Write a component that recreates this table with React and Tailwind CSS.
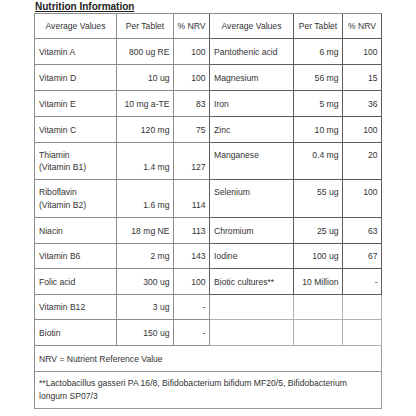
import React from "react";

const L = "border-r border-b border-[#8c8c8c]";
const LD = "border-r border-b border-r-[#5c5c5c] border-b-[#8c8c8c]";
const R = "border-r border-b border-[#5c5c5c]";
const E = "border-r border-b border-[#b0b0b0]";

function Cell({ cls, align = "left", children }) {
  const a =
    align === "right"
      ? "justify-end text-right pr-[3.5px]"
      : align === "center"
      ? "justify-center text-center"
      : "justify-start text-left pl-[4px]";
  return <div className={`flex items-center ${a} ${cls}`}>{children}</div>;
}

function Two({ a, b }) {
  return (
    <span className="block leading-[12.4px]">
      {a}
      <br />
      {b}
    </span>
  );
}

const nb = "\u00a0";

export default function App() {
  const rows = [
    ["Vitamin A", "800 ug RE", "100", "Pantothenic acid", "6 mg", "100"],
    ["Vitamin D", "10 ug", "100", "Magnesium", "56 mg", "15"],
    ["Vitamin E", "10 mg a-TE", "83", "Iron", "5 mg", "36"],
    ["Vitamin C", "120 mg", "75", "Zinc", "10 mg", "100"],
  ];
  const rows2 = [
    ["Niacin", "18 mg NE", "113", "Chromium", "25 ug", "63"],
    ["Vitamin B6", "2 mg", "143", "Iodine", "100 ug", "67"],
    ["Folic acid", "300 ug", "100", "Biotic cultures**", "10 Million", "-"],
  ];
  const renderRow = (r, i) => (
    <React.Fragment key={r[0] + i}>
      <Cell cls={L}>{r[0]}</Cell>
      <Cell cls={L} align="right">{r[1]}</Cell>
      <Cell cls={LD} align="right">{r[2]}</Cell>
      <Cell cls={R}>{r[3]}</Cell>
      <Cell cls={R} align="right">{r[4]}</Cell>
      <Cell cls={R} align="right">{r[5]}</Cell>
    </React.Fragment>
  );
  return (
    <div
      className="w-[416px] h-[416px] bg-white text-[#333] pl-[34px]"
      style={{ fontFamily: '"Liberation Sans", Arial, sans-serif' }}
    >
      <div className="text-[10px] font-bold leading-[13px] underline text-[#222] pl-[1px]">
        Nutrition Information
      </div>
      <div className="grid w-[348px] grid-cols-[82px_57px_36px_84px_49px_39px] grid-rows-[25px_26px_26px_26px_26px_37px_38px_26px_25px_26px_25px_26px_26px_37px] border-l border-t border-[#8c8c8c] text-[8.6px] leading-[12px]">
        <Cell cls={L} align="center">Average Values</Cell>
        <Cell cls={L} align="center">Per Tablet</Cell>
        <Cell cls={LD} align="center">% NRV</Cell>
        <Cell cls={R} align="center">Average Values</Cell>
        <Cell cls={R} align="center">Per Tablet</Cell>
        <Cell cls={R} align="center">% NRV</Cell>
        {rows.map(renderRow)}
        <Cell cls={L}><Two a="Thiamin" b="(Vitamin B1)" /></Cell>
        <Cell cls={L} align="right"><Two a={nb} b="1.4 mg" /></Cell>
        <Cell cls={LD} align="right"><Two a={nb} b="127" /></Cell>
        <Cell cls={R}><Two a="Manganese" b={nb} /></Cell>
        <Cell cls={R} align="right"><Two a="0.4 mg" b={nb} /></Cell>
        <Cell cls={R} align="right"><Two a="20" b={nb} /></Cell>
        <Cell cls={L}><Two a="Riboflavin" b="(Vitamin B2)" /></Cell>
        <Cell cls={L} align="right"><Two a={nb} b="1.6 mg" /></Cell>
        <Cell cls={LD} align="right"><Two a={nb} b="114" /></Cell>
        <Cell cls={R}><Two a="Selenium" b={nb} /></Cell>
        <Cell cls={R} align="right"><Two a="55 ug" b={nb} /></Cell>
        <Cell cls={R} align="right"><Two a="100" b={nb} /></Cell>
        {rows2.map(renderRow)}
        <Cell cls={L}>Vitamin B12</Cell>
        <Cell cls={L} align="right">3 ug</Cell>
        <Cell cls={L} align="right">-</Cell>
        <Cell cls={E}>{""}</Cell>
        <Cell cls={E}>{""}</Cell>
        <Cell cls={E}>{""}</Cell>
        <Cell cls={L}>Biotin</Cell>
        <Cell cls={L} align="right">150 ug</Cell>
        <Cell cls={L} align="right">-</Cell>
        <Cell cls={E}>{""}</Cell>
        <Cell cls={E}>{""}</Cell>
        <Cell cls={E}>{""}</Cell>
        <div className="col-span-6 flex items-center pl-[4px] border-r border-b border-[#9a9a9a]">
          NRV = Nutrient Reference Value
        </div>
        <div className="col-span-6 flex items-center pl-[4px] pr-[16px] border-r border-b border-[#9a9a9a] leading-[13.3px]">
          <span>
            **Lactobacillus gasseri PA 16/8, Bifidobacterium bifidum MF20/5, Bifidobacterium
            <br />
            longum SP07/3
          </span>
        </div>
      </div>
    </div>
  );
}
